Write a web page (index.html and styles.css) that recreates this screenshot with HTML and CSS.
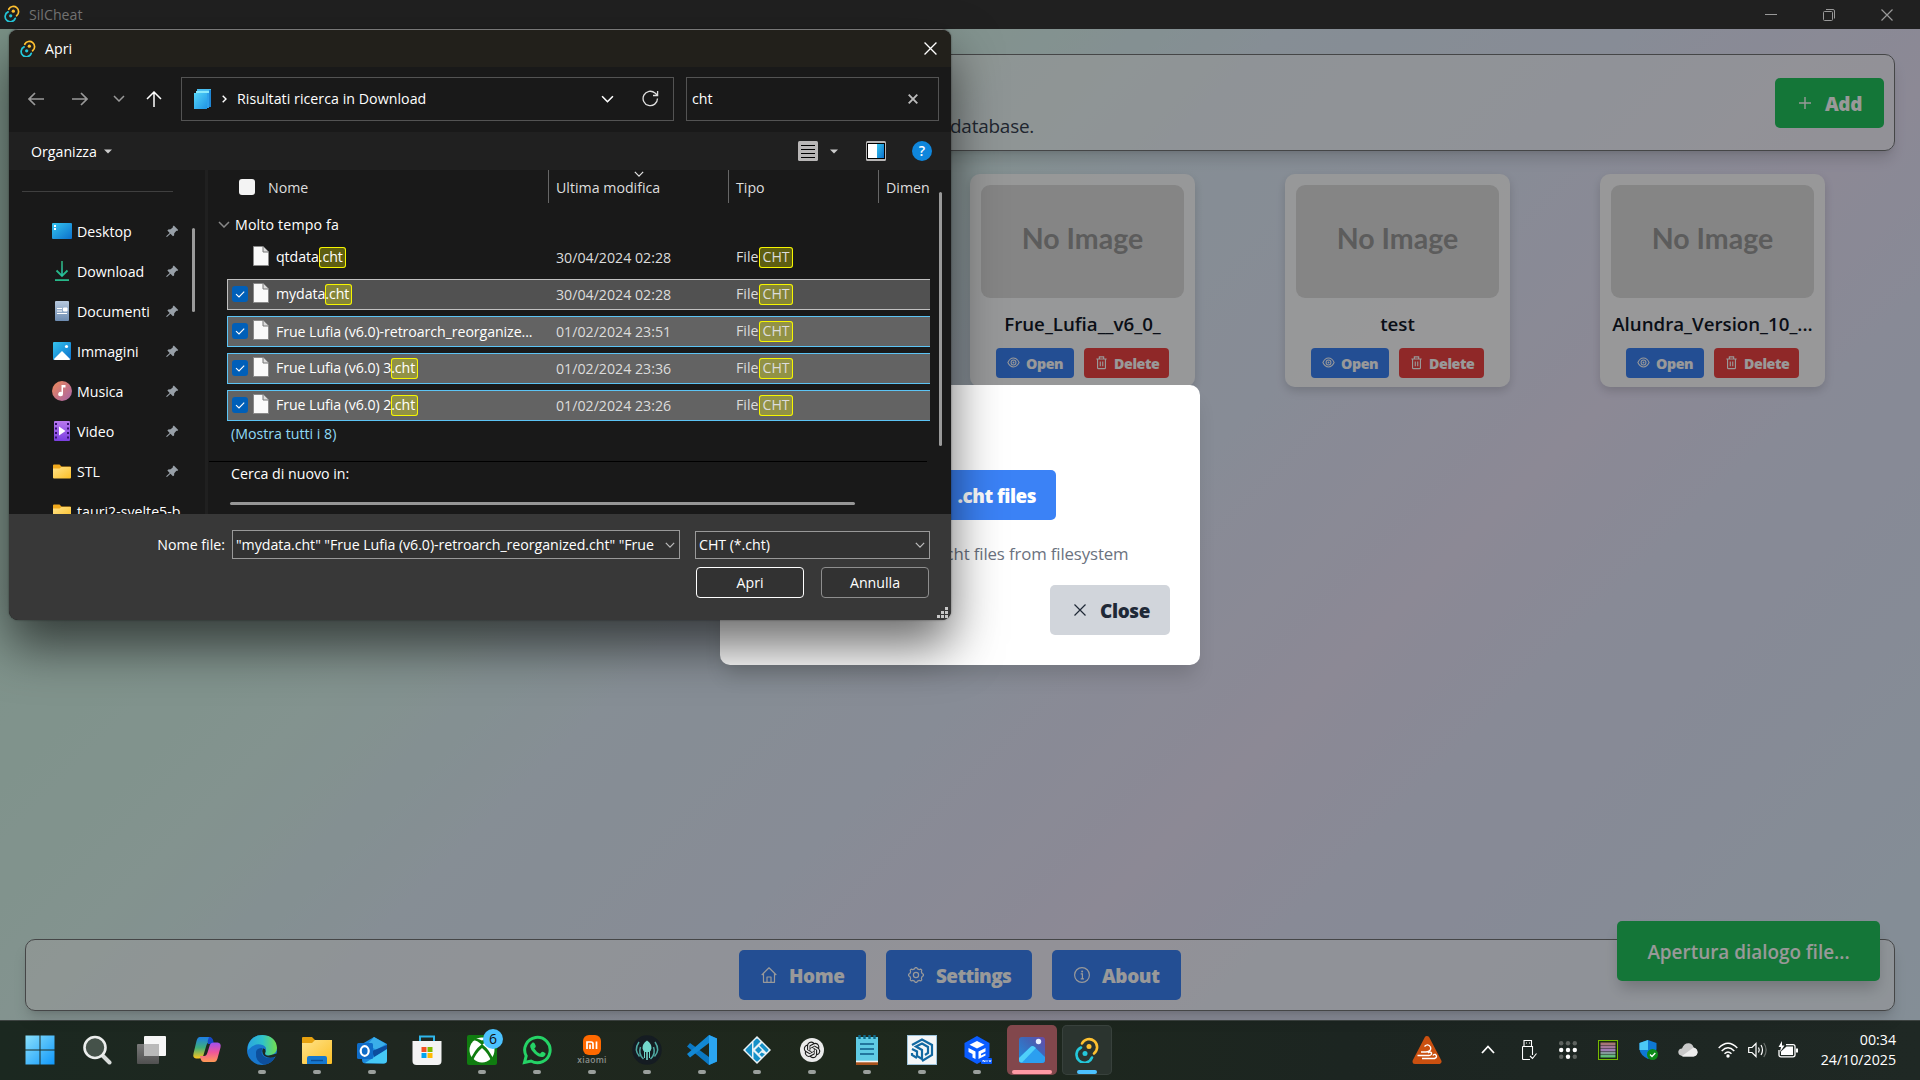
FILE: index.html
```html
<!DOCTYPE html>
<html lang="it">
<head>
<meta charset="utf-8">
<title>SilCheat</title>
<link rel="stylesheet" href="styles.css">
</head>
<body>
<svg width="0" height="0" class="defs" aria-hidden="true">
  <defs>
    <linearGradient id="gBlue" x1="0" y1="0" x2="1" y2="1"><stop offset="0" stop-color="#35c4ee"/><stop offset="1" stop-color="#0b6fcb"/></linearGradient>
    <linearGradient id="gLib" x1="0" y1="0" x2="1" y2="1"><stop offset="0" stop-color="#55d6fa"/><stop offset="1" stop-color="#1f93e4"/></linearGradient>
    <linearGradient id="gWin" x1="0" y1="0" x2="1" y2="1"><stop offset="0" stop-color="#8ae0fb"/><stop offset="1" stop-color="#1098fb"/></linearGradient>
    <linearGradient id="gFold" x1="0" y1="0" x2="1" y2="1"><stop offset="0" stop-color="#ffe38a"/><stop offset="1" stop-color="#fcbf26"/></linearGradient>
    <linearGradient id="gMus" x1="0" y1="0" x2="1" y2="1"><stop offset="0" stop-color="#ee8a58"/><stop offset="1" stop-color="#a562a8"/></linearGradient>
    <linearGradient id="gVid" x1="0" y1="0" x2="0" y2="1"><stop offset="0" stop-color="#b878ee"/><stop offset="1" stop-color="#7a3fe0"/></linearGradient>
    <linearGradient id="gDoc" x1="0" y1="0" x2="0" y2="1"><stop offset="0" stop-color="#b6c8de"/><stop offset="1" stop-color="#6d8bb0"/></linearGradient>
    <linearGradient id="gDown" x1="0" y1="0" x2="0" y2="1"><stop offset="0" stop-color="#2fae78"/><stop offset="1" stop-color="#27c6b0"/></linearGradient>
    <linearGradient id="gEdge" x1="0" y1="0" x2="1" y2="0"><stop offset="0" stop-color="#2aa5e0"/><stop offset=".5" stop-color="#2fc3c9"/><stop offset="1" stop-color="#74e04c"/></linearGradient>
    <linearGradient id="gCopA" x1="0" y1="0" x2="0" y2="1"><stop offset="0" stop-color="#1d7fe8"/><stop offset=".5" stop-color="#3fae7a"/><stop offset="1" stop-color="#ffc61c"/></linearGradient>
    <linearGradient id="gCopB" x1="0" y1="0" x2="0" y2="1"><stop offset="0" stop-color="#a050f0"/><stop offset=".5" stop-color="#f0559a"/><stop offset="1" stop-color="#ff9a55"/></linearGradient>
    <linearGradient id="gPhoto" x1="0" y1="1" x2="1" y2="0"><stop offset="0" stop-color="#1f8fe0"/><stop offset=".6" stop-color="#3f66b8"/><stop offset="1" stop-color="#6a4aa8"/></linearGradient>
    <linearGradient id="gPix" x1="0" y1="0" x2="0" y2="1"><stop offset="0" stop-color="#a87464"/><stop offset=".5" stop-color="#a07ab8"/><stop offset="1" stop-color="#4fd068"/></linearGradient>
    <linearGradient id="gGrey" x1="0" y1="0" x2="0" y2="1"><stop offset="0" stop-color="#7a7a7a"/><stop offset="1" stop-color="#505050"/></linearGradient>
  </defs>
  <symbol id="tauri" viewBox="0 0 24 26">
    <g fill="none" stroke-width="2.6" stroke-linecap="round">
      <path d="M7 6.5A8 8 0 1 1 19 16.5" stroke="#ffc131"/>
      <path d="M6 10.5A8 8 0 1 0 17 20.5" stroke="#24c8db"/>
    </g>
    <circle cx="14" cy="9.5" r="2.5" fill="#ffc131"/><circle cx="10" cy="16.5" r="2.5" fill="#24c8db"/>
  </symbol>
  <symbol id="pin" viewBox="0 0 14 14"><path d="M8.4.6 13.2 5.4 12 6.5 11.2 6.3 8.9 8.8 8.7 11.2 7.5 12 4.8 9.3 1.3 12.7.3 12.9.5 11.9 4 8.5 1.5 6 2.4 4.9 5 4.7 7.5 2.5 7.3 1.6Z" fill="#98a0a8"/></symbol>
  <symbol id="file" viewBox="0 0 16 20"><path d="M.5.5H10L15.5 6V19.5H.5Z" fill="#fafafa" stroke="#8a8a8a"/><path d="M10 .5V6H15.5" fill="#ddd" stroke="#777"/></symbol>
  <symbol id="folder" viewBox="0 0 18 15"><path d="M0 1.5Q0 .5 1 .5H6.5L8.5 2.5H17Q18 2.5 18 3.5V8H0Z" fill="#f0a81c"/><path d="M0 4.5H6.5L8.5 3H18V13.5Q18 14.5 17 14.5H1Q0 14.5 0 13.5Z" fill="url(#gFold)"/></symbol>
  <symbol id="chev" viewBox="0 0 12 7"><path d="M1 1 6 6 11 1" fill="none" stroke="currentColor" stroke-width="1.5"/></symbol>
  <symbol id="cross" viewBox="0 0 12 12"><path d="M.5.5 11.5 11.5M11.5.5.5 11.5" fill="none" stroke="currentColor" stroke-width="1.2"/></symbol>
  <symbol id="check" viewBox="0 0 16 16"><rect width="16" height="16" rx="3" fill="#005fb8"/><path d="M4 8.2 7 11 12.2 5.6" fill="none" stroke="#fff" stroke-width="1.1"/></symbol>
  <symbol id="eye" viewBox="0 0 16 16"><g fill="none" stroke="currentColor" stroke-width="1.1"><path d="M2 8Q4.2 3.3 8 3.3T14 8Q11.8 12.7 8 12.7T2 8Z"/><circle cx="8" cy="8" r="2.6"/></g><circle cx="8" cy="8" r="1" fill="currentColor"/></symbol>
  <symbol id="trash" viewBox="0 0 16 16"><path d="M2.5 4.3H13.5M5.7 4V2H10.3V4M3.8 4.5V13.5Q3.8 14.5 4.8 14.5H11.2Q12.2 14.5 12.2 13.5V4.5M6.7 7V12M9.3 7V12" fill="none" stroke="currentColor" stroke-width="1.2"/></symbol>
</svg>

<main class="app">
  <div class="titlebar">
    <svg class="tb-logo"><use href="#tauri"/></svg><span class="tb-name">SilCheat</span>
    <div class="win-ctl">
      <svg width="12" height="12"><path d="M0 5.5H12" stroke="currentColor"/></svg>
      <svg width="12" height="12"><path d="M.5 3.5Q.5 2.5 1.5 2.5H8.5Q9.5 2.5 9.5 3.5V10.5Q9.5 11.5 8.5 11.5H1.5Q.5 11.5.5 10.5ZM3 .5H10Q11.500 .5 11.5 2V9.500" fill="none" stroke="currentColor"/></svg>
      <svg width="12" height="12"><use href="#cross"/></svg>
    </div>
  </div>
  <div class="page">
    <header class="panel top-panel">
      <p class="lead">database.</p>
      <button class="btn green"><svg width="16" height="16"><path d="M8 2V14M2 8H14" stroke="currentColor" stroke-width="1.4"/></svg><span>Add</span></button>
    </header>
    <section class="cards">
      <article class="card"><div class="thumb">No Image</div><h2>Frue_Lufia__v6_0_</h2><div class="acts"><button class="sbtn open"><svg><use href="#eye"/></svg>Open</button><button class="sbtn del"><svg><use href="#trash"/></svg>Delete</button></div></article>
      <article class="card"><div class="thumb">No Image</div><h2>test</h2><div class="acts"><button class="sbtn open"><svg><use href="#eye"/></svg>Open</button><button class="sbtn del"><svg><use href="#trash"/></svg>Delete</button></div></article>
      <article class="card"><div class="thumb">No Image</div><h2>Alundra_Version_10_...</h2><div class="acts"><button class="sbtn open"><svg><use href="#eye"/></svg>Open</button><button class="sbtn del"><svg><use href="#trash"/></svg>Delete</button></div></article>
    </section>
    <footer class="panel nav-panel">
      <button class="btn blue home"><svg width="16" height="16"><path d="M.7 8 8 .8 15.300 8M2.500 6.500V15.300H13.500V6.500M6 15V10H10V15" fill="none" stroke="currentColor" stroke-width="1.2" stroke-linejoin="round"/></svg><span>Home</span></button>
      <button class="btn blue settings"><svg width="16" height="16" viewBox="0 0 16 16"><g fill="none" stroke="currentColor" stroke-width="1.200" stroke-linejoin="round"><path d="M6.500 1.900 7.300.6H8.700L9.500 1.900 11.300 2.600 12.800 2.200 13.800 3.200 13.400 4.700 14.100 6.500 15.400 7.300V8.700L14.100 9.500 13.400 11.300 13.800 12.800 12.800 13.800 11.300 13.400 9.500 14.100 8.700 15.400H7.300L6.500 14.100 4.700 13.400 3.200 13.800 2.200 12.800 2.600 11.300 1.900 9.500.6 8.700V7.300L1.900 6.500 2.600 4.700 2.200 3.200 3.200 2.200 4.700 2.600Z"/><circle cx="8" cy="8" r="2.600"/></g></svg><span>Settings</span></button>
      <button class="btn blue about"><svg width="16" height="16"><circle cx="8" cy="8" r="7.400" fill="none" stroke="currentColor" stroke-width="1.200"/><path d="M6.700 6.800H8.400V11.800M6.700 11.800H10" fill="none" stroke="currentColor" stroke-width="1.200"/><circle cx="8.100" cy="4.400" r="1" fill="currentColor"/></svg><span>About</span></button>
    </footer>
    <div class="toast">Apertura dialogo file...</div>
    <div class="shade">
      <div class="modal">
        <button class="btn pick"><span>.cht files</span></button>
        <p>cht files from filesystem</p>
        <button class="btn close"><svg width="12" height="12"><use href="#cross"/></svg><span>Close</span></button>
      </div>
    </div>
  </div>
</main>

<section class="dialog">
  <div class="d-title"><svg class="d-logo"><use href="#tauri"/></svg><span>Apri</span><svg class="d-x" width="13" height="13"><use href="#cross"/></svg></div>
  <div class="d-nav">
    <svg class="n-back" width="16" height="14"><path d="M7 1 1 7 7 13M1 7H16" fill="none" stroke="#999" stroke-width="1.700"/></svg>
    <svg class="n-fwd" width="16" height="14"><path d="M9 1 15 7 9 13M15 7H0" fill="none" stroke="#999" stroke-width="1.700"/></svg>
    <svg class="n-rec" width="12" height="7"><use href="#chev"/></svg>
    <svg class="n-up" width="16" height="16"><path d="M1 8 8 1 15 8M8 1V16" fill="none" stroke="#fff" stroke-width="1.500"/></svg>
    <div class="addr">
      <svg width="18" height="20"><path d="M3 0H17V18H3Z" fill="#49bdf0"/><path d="M17 1V18H15V1Z" fill="#1f86d4"/><path d="M2 2H15V19H2Z" fill="#8ae8fb"/><path d="M13 4H15V19H13Z" fill="#2fa0ea"/><path d="M0 4H13V20H0Z" fill="url(#gLib)"/></svg>
      <svg class="crumb" width="5" height="8"><path d="M.7.7 4 4 .7 7.300" fill="none" stroke="#fff" stroke-width="1.400"/></svg>
      <span>Risultati ricerca in Download</span>
      <svg class="a-drop" width="13" height="8"><use href="#chev"/></svg>
      <svg class="a-ref" width="17" height="17"><path d="M15.500 8.500A7.200 7.200 0 1 1 13 3L15.300 5M15.600 1V5.500H11" fill="none" stroke="#ddd" stroke-width="1.300"/></svg>
    </div>
    <div class="search"><span>cht</span><svg width="10" height="10"><path d="M.7.7 9.300 9.300M9.300.7.7 9.300" stroke="#bbb" stroke-width="1.900"/></svg></div>
  </div>
  <div class="d-tools">
    <span>Organizza</span><svg class="tri" width="8" height="5"><path d="M0 .5H8L4 4.500Z" fill="#ccc"/></svg>
    <svg class="t-list" width="20" height="20"><rect width="20" height="20" rx="1.500" fill="#b8b6b6"/><path d="M3 4.500H17M3 8.500H17M3 12.500H17M3 16.500H17" stroke="#000"/></svg>
    <svg class="t-tri" width="8" height="5"><path d="M0 .5H8L4 4.500Z" fill="#ccc"/></svg>
    <svg class="t-prev" width="20" height="20"><rect width="20" height="20" rx="1.500" fill="#b8b6b6"/><rect x="1.500" y="2.500" width="17" height="15" fill="#fff" stroke="#000"/><path d="M11 3H18V17H11Z" fill="url(#gBlue)"/></svg>
    <div class="t-help">?</div>
  </div>
  <div class="d-body">
    <aside>
      <div class="side">
        <hr>
        <div class="place"><svg width="20" height="16"><rect width="20" height="16" rx="1" fill="url(#gBlue)"/><path d="M2 2H4V4H2ZM2 5H4V7H2Z" fill="#fff"/></svg><span>Desktop</span><svg class="pin"><use href="#pin"/></svg></div>
        <div class="place"><svg width="14" height="20"><path d="M1.500 9.500 7 15 12.500 9.500" fill="none" stroke="#27b88a" stroke-width="1.800"/><path d="M0 18.200H14V20H0Z" fill="#27b88a"/><path d="M6.200 0H7.800V15H6.200Z" fill="url(#gDown)"/></svg><span>Download</span><svg class="pin"><use href="#pin"/></svg></div>
        <div class="place"><svg width="14" height="20"><rect width="14" height="20" rx="1" fill="url(#gDoc)"/><path d="M2 7.500H7M2 10H7M2 12.500H12M8.500 7H12V10H8.500Z" stroke="#fff" fill="#fff"/></svg><span>Documenti</span><svg class="pin"><use href="#pin"/></svg></div>
        <div class="place"><svg width="18" height="18"><rect width="18" height="18" rx="1" fill="url(#gBlue)"/><path d="M1 17 9 9 17 17Q17 18 16 18H2Q1 18 1 17Z" fill="#fff"/><circle cx="13.500" cy="4.500" r="1.600" fill="#fff"/></svg><span>Immagini</span><svg class="pin"><use href="#pin"/></svg></div>
        <div class="place"><svg width="20" height="20"><circle cx="10" cy="10" r="10" fill="url(#gMus)"/><path d="M9.500 4H13.500V6.500H11V13A2.400 2.200 0 1 1 9.500 11Z" fill="#fff"/></svg><span>Musica</span><svg class="pin"><use href="#pin"/></svg></div>
        <div class="place"><svg width="16" height="20"><rect width="16" height="20" rx="1" fill="url(#gVid)"/><path d="M2 2V19M14 2V19" stroke="#33106e" stroke-width="2" stroke-dasharray="2 2.500"/><path d="M5 5.500 11.500 10 5 14.500Z" fill="#fff"/></svg><span>Video</span><svg class="pin"><use href="#pin"/></svg></div>
        <div class="place"><svg width="18" height="15"><use href="#folder"/></svg><span>STL</span><svg class="pin"><use href="#pin"/></svg></div>
        <div class="place"><svg width="18" height="15"><use href="#folder"/></svg><span>tauri2-svelte5-b</span></div>
      </div>
      <div class="v-thumb"></div>
    </aside>
    <div class="list">
      <div class="l-main">
        <div class="cols"><i class="box"></i><span class="c-name">Nome</span><span class="c-date">Ultima modifica<svg width="10" height="6"><use href="#chev"/></svg></span><span class="c-type">Tipo</span><span class="c-size">Dimen</span></div>
        <div class="group"><svg width="12" height="7"><use href="#chev"/></svg>Molto tempo fa</div>
        <div class="rows">
          <div class="row"><i></i><svg class="f"><use href="#file"/></svg><span class="r-name">qtdata<mark>.cht</mark></span><span class="r-date">30/04/2024 02:28</span><span class="r-type">File<mark class="m2">CHT</mark></span></div>
          <div class="row sel cur"><svg class="c"><use href="#check"/></svg><svg class="f"><use href="#file"/></svg><span class="r-name">mydata<mark>.cht</mark></span><span class="r-date">30/04/2024 02:28</span><span class="r-type">File<mark class="m2">CHT</mark></span></div>
          <div class="row sel"><svg class="c"><use href="#check"/></svg><svg class="f"><use href="#file"/></svg><span class="r-name">Frue Lufia (v6.0)-retroarch_reorganize...</span><span class="r-date">01/02/2024 23:51</span><span class="r-type">File<mark class="m2">CHT</mark></span></div>
          <div class="row sel"><svg class="c"><use href="#check"/></svg><svg class="f"><use href="#file"/></svg><span class="r-name">Frue Lufia (v6.0) 3<mark>.cht</mark></span><span class="r-date">01/02/2024 23:36</span><span class="r-type">File<mark class="m2">CHT</mark></span></div>
          <div class="row sel"><svg class="c"><use href="#check"/></svg><svg class="f"><use href="#file"/></svg><span class="r-name">Frue Lufia (v6.0) 2<mark>.cht</mark></span><span class="r-date">01/02/2024 23:26</span><span class="r-type">File<mark class="m2">CHT</mark></span></div>
        </div>
        <div class="more">(Mostra tutti i 8)</div>
        <div class="again">Cerca di nuovo in:</div>
        <div class="h-thumb"></div>
      </div>
      <div class="v-thumb2"></div>
    </div>
  </div>
  <div class="d-foot">
    <div class="f-row"><label>Nome file:</label><div class="combo name"><span>"mydata.cht" "Frue Lufia (v6.0)-retroarch_reorganized.cht" "Frue</span><svg width="10" height="6"><use href="#chev"/></svg></div><div class="combo type"><span>CHT (*.cht)</span><svg width="10" height="6"><use href="#chev"/></svg></div></div>
    <div class="f-btns"><button class="dbtn def">Apri</button><button class="dbtn">Annulla</button></div>
    <svg class="grip" width="11" height="11"><path d="M8 0H11V3H8ZM4 4H7V7H4ZM8 4H11V7H8ZM0 8H3V11H0ZM4 8H7V11H4ZM8 8H11V11H8Z" fill="#c8c8c8"/></svg>
  </div>
</section>

<div class="taskbar">
  <div class="apps">
    <div class="slot first"><svg width="30" height="30"><path d="M.5.5H14.500V14.500H.5ZM15.500.5H29.500V14.500H15.500ZM.5 15.500H14.500V29.500H.5ZM15.500 15.500H29.500V29.500H15.500Z" fill="url(#gWin)"/></svg></div>
    <div class="slot"><svg width="30" height="30"><path d="M20.500 20.500 27.500 27.500" stroke="#d8dcda" stroke-width="4" stroke-linecap="round"/><circle cx="13" cy="12.500" r="10.500" fill="#45524a" stroke="#eceeed" stroke-width="2.600"/></svg></div>
    <div class="slot"><svg width="30" height="30"><rect x="0" y="9" width="22" height="20" rx="1" fill="url(#gGrey)"/><rect x="7" y="1" width="22" height="20" rx="1" fill="#f6f6f6"/><rect x="7" y="9" width="15" height="12" fill="#b9b9b9"/></svg></div>
    <div class="slot"><svg width="30" height="30"><path d="M8 2H17Q19.500 2 20.300 4.500L21 7H18Q15.500 7 14.500 10L11.500 20Q10.500 23.500 7 23.500H4Q.5 23 1.500 18.500L4.500 6Q5.500 2 8 2Z" fill="url(#gCopA)"/><path d="M17 2Q20 2 21 5L22 9H16Q15 6 17 2Z" fill="#1746c8"/><path d="M22 27H12Q9.500 27 8.500 23.500L8 21H12Q14.500 21 15.500 17.500L18 9.500Q19 7.500 22 7.500H25.500Q29.500 8 28.500 12.500L25.500 23.500Q24.500 27 22 27Z" fill="url(#gCopB)"/></svg></div>
    <div class="slot run"><svg width="30" height="30"><circle cx="15" cy="15" r="15" fill="#1877cc"/><path d="M1 11Q4 0 15.500 0 29 .8 30 13 29.500 20 22 20.500 17 20 18.500 16.500 20.500 12 15.500 10 8 7 1 15Z" fill="url(#gEdge)"/><path d="M9 17Q8 27 17 29.800 25 29 28 21.500 22 24.500 17 21.500 13 18 15.500 13Q9.500 13 9 17Z" fill="#0d4f9c"/><path d="M18.500 17Q16.500 21 22 20.600L28 19 30.500 18.500 30 21 28 21.800Q22 24 17.500 21 14 17.500 16 13.500Q19 13 18.500 17Z" fill="#1e2821"/></svg></div>
    <div class="slot run"><svg width="30" height="30"><path d="M0 3Q0 2 1 2H10L13 5H29Q30 5 30 6V14H0Z" fill="#e6a10f"/><path d="M0 8H10L13 5H30V28Q30 29 29 29H1Q0 29 0 28Z" fill="url(#gFold)"/><path d="M5 29V23Q5 21 7 21H23Q25 21 25 23V29Z" fill="#1678cf"/><path d="M9 25.500H21" stroke="#0a4c94" stroke-width="1.400"/></svg></div>
    <div class="slot run"><svg width="30" height="30"><path d="M5 9 17 2 30 9V25Q30 28.500 26.500 28.500H9Q5 28.500 5 25Z" fill="#1b88dc"/><path d="M11 9 17 2 29 9 19 15Z" fill="#3aaeea"/><path d="M15 16 30 10V15L17 22Z" fill="#0c4c9e"/><path d="M8 28 30 14V25Q30 28.500 26.500 28.500Z" fill="#45c8f5"/><rect x="0" y="8" width="16" height="16" rx="1.500" fill="#0f6cc8"/><ellipse cx="7.700" cy="16" rx="4" ry="4.800" fill="none" stroke="#fff" stroke-width="2.200"/></svg></div>
    <div class="slot"><svg width="30" height="30"><path d="M8 6V1.500H22V6" fill="none" stroke="#2fb6ea" stroke-width="2"/><path d="M.5 6H29.500V26Q29.500 30 25.500 30H4.500Q.5 30 .5 26Z" fill="#f3f3f3"/><path d="M9.500 12H14.500V17H9.500Z" fill="#f25022"/><path d="M15.500 12H20.500V17H15.500Z" fill="#7fba00"/><path d="M9.500 18H14.500V23H9.500Z" fill="#00a4ef"/><path d="M15.500 18H20.500V23H15.500Z" fill="#ffb900"/></svg></div>
    <div class="slot run"><svg width="30" height="30"><rect width="30" height="30" rx="2" fill="#107c10"/><circle cx="15" cy="15" r="12.500" fill="#fff"/><path d="M3 26Q7 15 14.500 9.500 10 5 5.500 5.200 9 2 15 5.500 21 2 24.500 5.200 20 5 15.500 9.500 23 15 27 26L24.500 26.500Q21 18 15 13 9 18 5.500 26.500Z" fill="#107c10"/></svg><b class="badge">6</b></div>
    <div class="slot run"><svg width="30" height="30"><path d="M2.500 27.500 4.200 21A12.700 12.700 0 1 1 9 26Z" fill="none" stroke="#25d366" stroke-width="3"/><path d="M10.500 7.500Q12 7 12.700 8.500L13.800 11Q14 12 12.300 13.500 14.500 17.300 18 18.700L19.700 17Q20.500 16.500 21.500 17L23.500 18.300Q24 20 22 21.500 18 23.500 12.500 18.500 5 11.500 10.500 7.500Z" fill="#25d366"/></svg></div>
    <div class="slot run"><svg width="30" height="20" class="mi"><rect x="6" y="0" width="18" height="20" rx="6" fill="#ff6900"/><path d="M10 14V7H14Q16 7 16 9V14M13 9.500V14M19.500 6.500V14" fill="none" stroke="#fff" stroke-width="1.700"/></svg><small>xiaomi</small></div>
    <div class="slot run"><svg width="30" height="30"><circle cx="15" cy="15" r="14.700" fill="#151c22"/><path d="M15 5.500Q20 9 19.500 13.500 19 16 17 17H13Q11 16 10.500 13.500 10 9 15 5.500ZM14.200 16H15.800V25H14.200ZM12 16H13V23H12ZM17 16H18V23H17Z" fill="#74d8cc"/><path d="M7 7Q1.500 15 7.500 21.500M23 7Q28.500 15 22.500 21.500M8.500 12Q6 19 11.500 24M21.500 12Q24 19 18.500 24" fill="none" stroke="#4fa9a2" stroke-width="1.500"/></svg></div>
    <div class="slot run"><svg width="30" height="30"><path d="M22 0 30 3.500V26.500L22 30 0 11.500 3 8 22 22Z" fill="#0b78c4"/><path d="M22 0V8L3 22.500 0 19Z" fill="#1288d4"/><path d="M22 0 30 3.500V26.500L22 30Z" fill="#2ba5f2"/></svg></div>
    <div class="slot run"><svg width="30" height="30"><path d="M15 1 29 15 15 29 1 15Z" fill="#e9f2f6"/><path d="M10 8V22L4 16Q3 15 4 14ZM11.500 6.500 14 4Q15 3 16 4L18.500 6.500 11.500 13.500ZM20 8 26 14Q27 15 26 16L24.500 17.500 17.500 10.500ZM13 15 16.500 11.500 20 15 16.500 18.500ZM11.500 16.500 18.500 23.500 16 26Q15 27 14 26L11.500 23.500ZM17.500 19.500 19.500 17.500 23 19 20 22Z" fill="#1590c8"/></svg></div>
    <div class="slot run"><svg width="30" height="30"><circle cx="15" cy="15" r="12" fill="#ebebeb"/><path transform="translate(6.800 6.600) scale(.69)" fill="#1a1a1a" d="M22.2819 9.8211a5.9847 5.9847 0 0 0-.5157-4.9108 6.0462 6.0462 0 0 0-6.5098-2.9A6.0651 6.0651 0 0 0 4.9807 4.1818a5.9847 5.9847 0 0 0-3.9977 2.9 6.0462 6.0462 0 0 0 .7427 7.0966 5.98 5.98 0 0 0 .511 4.9107 6.051 6.051 0 0 0 6.5146 2.9001A5.9847 5.9847 0 0 0 13.2599 24a6.0557 6.0557 0 0 0 5.7718-4.2058 5.9894 5.9894 0 0 0 3.9977-2.9001 6.0557 6.0557 0 0 0-.7475-7.0729zm-9.022 12.6081a4.4755 4.4755 0 0 1-2.8764-1.0408l.1419-.0804 4.7783-2.7582a.7948.7948 0 0 0 .3927-.6813v-6.7369l2.02 1.1686a.071.071 0 0 1 .038.052v5.5826a4.504 4.504 0 0 1-4.4945 4.4944zm-9.6607-4.1254a4.4708 4.4708 0 0 1-.5346-3.0137l.142.0852 4.783 2.7582a.7712.7712 0 0 0 .7806 0l5.8428-3.3685v2.3324a.0804.0804 0 0 1-.0332.0615L9.74 19.9502a4.4992 4.4992 0 0 1-6.1408-1.6464zM2.3408 7.8956a4.485 4.485 0 0 1 2.3655-1.9728V11.6a.7664.7664 0 0 0 .3879.6765l5.8144 3.3543-2.0201 1.1685a.0757.0757 0 0 1-.071 0l-4.8303-2.7865A4.504 4.504 0 0 1 2.3408 7.872zm16.5963 3.8558L13.1038 8.364 15.1192 7.2a.0757.0757 0 0 1 .071 0l4.8303 2.7913a4.4944 4.4944 0 0 1-.6765 8.1042v-5.6772a.79.79 0 0 0-.407-.667zm2.0107-3.0231l-.142-.0852-4.7735-2.7818a.7759.7759 0 0 0-.7854 0L9.409 9.2297V6.8974a.0662.0662 0 0 1 .0284-.0615l4.8303-2.7866a4.4992 4.4992 0 0 1 6.6802 4.66zM8.3065 12.863l-2.02-1.1638a.0804.0804 0 0 1-.038-.0567V6.0742a4.4992 4.4992 0 0 1 7.3757-3.4537l-.142.0805L8.704 5.459a.7948.7948 0 0 0-.3927.6813zm1.0976-2.3654l2.602-1.4998 2.6069 1.4998v2.9994l-2.5974 1.4997-2.6067-1.4997Z"/></svg></div>
    <div class="slot run"><svg width="30" height="30"><rect x="4" y="26" width="22" height="4" fill="#a8521c"/><rect x="4" y="2" width="22" height="25" fill="#5fcbe4"/><path d="M4 26.500H26" stroke="#f4f4f4" stroke-width="1.600"/><path d="M8 9H22M8 14H22M8 19H22" stroke="#0f5b86" stroke-width="1.700"/><path d="M7.500 0V4M12.500 0V4M17.500 0V4M22.500 0V4" stroke="#0f6a8a" stroke-width="2.400"/></svg></div>
    <div class="slot run"><svg width="30" height="30"><rect x=".5" y=".5" width="29" height="29" fill="#f4f6f8" stroke="#9fc5dc"/><g fill="none" stroke="#1268a2" stroke-width="2.200"><path d="M5 10 15 4.500 25 10V20L15 26"/><path d="M5 14 10 16.500V21L15 24V15L9 11.500 15 8.500 21 12V18L18 20"/><path d="M5 18V20L10 23"/></g></svg></div>
    <div class="slot run"><svg width="30" height="30"><path d="M15 1 27.500 8V22L15 29 2.500 22V8Z" fill="#0a5cff"/><path d="M15 6 22.500 9.700 15 13.500 7.500 9.700Z" fill="#fff"/><path d="M6.500 13 13.500 16.500V24L10.500 22.500V19L6.500 17ZM23.500 13 16.500 16.500V24L23.500 20.500V18.500L19 20.500V18.800L23.500 16.500Z" fill="#fff"/><rect x="19" y="23" width="11" height="6" rx="1" fill="#0a5cff"/><path d="M21 27V25L23 27V25M25 25V27M27 25 28 27 29 25" stroke="#fff" stroke-width=".8" fill="none"/></svg></div>
    <div class="slot hot"><svg width="26" height="26"><rect width="26" height="26" rx="3" fill="url(#gPhoto)"/><path d="M0 21 12 9.500Q13.500 8.500 15 9.500L26 20V23Q26 26 23 26H3Q0 26 0 23Z" fill="#2b9ff0"/><path d="M0 21 12 9.500Q13.500 8.500 15 9.500L17 11 3 25.500Q0 25 0 23Z" fill="#4fd0fa"/><circle cx="19.500" cy="4.500" r="2.700" fill="#e8f0ff"/></svg></div>
    <div class="slot on"><svg width="24" height="26"><use href="#tauri"/></svg></div>
  </div>
  <div class="tray">
    <svg class="t1" width="30" height="30"><path d="M15 3.500 27 26.500H3Z" fill="#ca5010" stroke="#ca5010" stroke-width="5" stroke-linejoin="round"/><path d="M5.500 20.500H17Q20 20 19.500 18 18 16 16 18M9 17H14Q20 16 18.500 12 16 8 12.500 11.500M10 23.500H22.500Q26 22 23.500 19.500 21.500 19 21 20.500" fill="none" stroke="#fff" stroke-width="1.400"/></svg>
    <svg class="t2" width="14" height="9"><path d="M1 8 7 1.500 13 8" fill="none" stroke="#fff" stroke-width="1.800"/></svg>
    <svg class="t3" width="15" height="20"><path d="M2 .5H9.500V6.500H2ZM.5 6.500H10.500V15M8 19.500H1.500Q.5 19.500.5 18.500V6.500M8 16 10.500 18.500 14.500 13.500M4 3H5M7 3H8" fill="none" stroke="#fff" stroke-width="1.100"/></svg>
    <svg class="t4" width="18" height="18"><g fill="#5e635f"><circle cx="2.200" cy="2.200" r="2.200"/><circle cx="9" cy="2.200" r="2.200"/><circle cx="15.800" cy="2.200" r="2.200"/><circle cx="2.200" cy="15.800" r="2.200"/><circle cx="15.800" cy="15.800" r="2.200"/></g><g fill="#fff"><circle cx="2.200" cy="9" r="2.200"/><circle cx="9" cy="9" r="2.200"/><circle cx="15.800" cy="9" r="2.200"/><circle cx="9" cy="15.800" r="2.200"/></g></svg>
    <svg class="t5" width="20" height="20"><rect x=".5" y=".5" width="19" height="19" fill="#1a2a12" stroke="#76b900"/><rect x="2" y="2" width="16" height="16" fill="url(#gPix)"/><path d="M2 5.500H18M2 8.500H18M2 11.500H18M2 14.500H18" stroke="#222" stroke-opacity=".5"/><path d="M2 2H18V18H2Z" fill="none" stroke="#1b2414"/></svg>
    <svg class="t6" width="20" height="20"><path d="M9 0 17.500 3V9Q17 15 9 19 1 15 .5 9V3Z" fill="#0f78d4"/><path d="M9 0V10H.5V3Z" fill="#4cc8f5"/><circle cx="13.500" cy="14.500" r="5.500" fill="#0c8a18"/><path d="M11 14.500 13 16.500 16.300 13" fill="none" stroke="#fff" stroke-width="1.300"/></svg>
    <svg class="t7" width="20" height="14"><path d="M4 13Q0 12 .3 8.500 1 5.500 4 5.500 6 0 11 .3 15 1 15.500 4.500 19.500 5.500 19.500 9.500 19 13 15.500 13.500H5Z" fill="#c9c9c9"/><path d="M4 13 15.500 4.500Q19.500 5.500 19.500 9.500 19 13 15.500 13.500H5Z" fill="#ededed"/></svg>
    <svg class="t8" width="20" height="16"><g fill="none" stroke="#fff" stroke-width="1.400"><path d="M.7 6Q10-3.500 19.300 6M3.700 9Q10 2.500 16.300 9M6.500 11.700Q10 8.200 13.500 11.700"/></g><circle cx="10" cy="14" r="1.700" fill="#fff"/></svg>
    <svg class="t9" width="20" height="16"><path d="M.7 5.500H4L8 1.500V14.500L4 10.500H.7ZM10.500 5.500Q12 8 10.500 10.500M13 3Q16 8 13 13" fill="none" stroke="#fff" stroke-width="1.200"/><path d="M15.800 1Q20.500 8 15.800 15" fill="none" stroke="#6a706c" stroke-width="1.200"/></svg>
    <svg class="t10" width="20" height="17"><path d="M8 3.600H15Q17 3.600 17 5.500V14Q17 15.800 15 15.800H3Q1 15.800 1 14V9" fill="none" stroke="#fff" stroke-width="1.300"/><path d="M8.500 5.500H15V14H3V10.500Z" fill="#fff"/><path d="M18 7.500H20V11.500H18Z" fill="#fff"/><path d="M4 0 .5 6H3L2 11 6.500 4.500H4Z" fill="#fff"/></svg>
    <div class="clock">00:34<br>24/10/2025</div>
  </div>
</div>
</body>
</html>
```
FILE: styles.css
```css
* { box-sizing: border-box; }
body { margin: 0; width: 1920px; height: 1080px; overflow: hidden; position: relative; background: #1e2620; font-family: "Open Sans", "Noto Sans", sans-serif; font-size: 14.2px; color: #fff; display: flex; flex-direction: column; }
button { font-family: inherit; border: 0; margin: 0; padding: 0; }
p, h2 { margin: 0; }
svg { display: block; flex: none; }
.defs { position: absolute; }

/* application window */
.app { height: 1020px; display: flex; flex-direction: column; }
.titlebar { height: 29px; background: #202020; display: flex; align-items: center; color: #757575; }
.tb-logo { width: 16px; height: 17px; margin: 0 9px 2px 4px; }
.win-ctl { margin-left: auto; display: flex; gap: 46px; padding-right: 26px; margin-right: 1px; color: #999; }
.page { position: relative; flex: 1; display: flex; flex-direction: column; padding: 25px 25px 9px;
  background: linear-gradient(135deg, #cdf3e2 0%, #d5f6e9 24%, #daf5ee 34%, #dfedf8 44%, #e2e9fa 56%, #e9e4f9 68%, #e3e6fa 75%, #dfe8fa 86%, #dcedfa 100%); }
.panel { background: rgba(255,255,255,.5); border: 1px solid #737577; border-radius: 10px; box-shadow: 0 10px 15px -3px rgba(0,0,0,.15), 0 4px 6px -4px rgba(0,0,0,.12); display: flex; align-items: center; }
.top-panel { height: 97px; padding: 0 10px 0 924px; justify-content: space-between; }
.lead { font-size: 18.9px; color: #374151; width: 83px; margin: 47px 0 0 0; white-space: nowrap; letter-spacing: -.2px; line-height: 26px; }
.btn { height: 50px; display: flex; align-items: center; border-radius: 5px; font-size: 18.9px; font-weight: 800; letter-spacing: -.35px; color: #fff; white-space: nowrap; }
.btn span { padding-top: 2px; }
.btn.green { width: 109px; background: #22c55e; padding-left: 22px; gap: 12px; }
.btn.blue { background: #3b82f6; padding-left: 22px; gap: 12px; }
.home { width: 127px; } .settings { width: 146px; letter-spacing: -.6px; } .about { width: 129px; }
.cards { display: flex; justify-content: flex-end; gap: 90px; margin-top: 23px; padding-right: 70px; }
.card { width: 225px; height: 213px; background: rgba(255,255,255,.9); border-radius: 10px; padding: 11px 11px 9px; box-shadow: 0 4px 10px rgba(0,0,0,.15); color: #111827; display: flex; flex-direction: column; align-items: center; }
.thumb { flex: none; width: 203px; height: 113px; border-radius: 9px; background: #dedede; color: #999; font: 700 28.5px/107px Lato, sans-serif; text-align: center; }
.card h2 { font-size: 18.7px; font-weight: 600; line-height: 28px; margin: 12px 0 10px; white-space: nowrap; }
.acts { display: flex; gap: 10px; }
.sbtn { height: 30px; border-radius: 4px; color: #fff; font-size: 14.2px; font-weight: 800; display: flex; align-items: center; padding: 1px 0 0 10px; gap: 5px; letter-spacing: -.4px; }
.sbtn svg { width: 15px; height: 15px; margin-bottom: 3px; }
.open { background: #3b82f6; width: 78px; } .del { background: #ef4444; width: 85px; }
.nav-panel { margin-top: auto; height: 72px; justify-content: center; gap: 20px; }
.toast { position: absolute; left: 1617px; top: 892px; width: 263px; height: 60px; border-radius: 5px; background: #22c55e; font-size: 18.9px; font-weight: 600; line-height: 62px; text-align: center; box-shadow: 0 10px 15px -3px rgba(0,0,0,.2); }
.shade { position: absolute; inset: 0; background: rgba(0,0,0,.4); display: flex; align-items: center; justify-content: center; }
.modal { width: 480px; height: 280px; background: #fff; border-radius: 10px; display: flex; flex-direction: column; align-items: center; padding: 85px 30px 30px; box-shadow: 0 15px 20px -5px rgba(0,0,0,.15); }
.pick { width: 192px; background: #3b82f6; justify-content: flex-end; padding-right: 20px; letter-spacing: -.5px; }
.modal p { width: 337px; text-align: right; font-size: 16.8px; line-height: 26px; color: #6b7280; margin-top: 21px; white-space: nowrap; letter-spacing: -.12px; }
.close { width: 120px; background: #d1d5db; color: #1f2937; align-self: flex-end; margin-top: 18px; padding-left: 24px; gap: 14px; }

/* file dialog window */
.dialog { position: absolute; left: 9px; top: 29px; width: 942px; height: 591px; border-radius: 9px; overflow: hidden; background: #191919; border-top: 1px solid #777; display: flex; flex-direction: column; box-shadow: 0 0 2px rgba(0,0,0,.5), 0 26px 50px rgba(0,0,0,.58); }
.d-title { height: 37px; background: #22201b; display: flex; align-items: center; padding: 0 14px 0 11px; }
.d-logo { width: 16px; height: 17px; margin: 0 9px 0 0; }
.d-x { margin-left: auto; }
.d-nav { height: 65px; display: flex; align-items: center; padding: 0 0 2px 19px; }
.n-fwd { margin-left: 28px; } .n-rec { margin-left: 25px; color: #999; } .n-up { margin: 0 19px 0 21px; }
.addr { width: 493px; height: 44px; border: 1px solid #535353; display: flex; align-items: center; padding-left: 12px; }
.crumb { margin: 0 10px; }
.addr span { white-space: nowrap; letter-spacing: .04px; }
.a-drop { margin-left: auto; margin-right: 28px; } .a-ref { margin-right: 14px; }
.search { width: 253px; height: 44px; border: 1px solid #535353; margin-left: 12px; display: flex; align-items: center; justify-content: space-between; padding: 0 20px 0 5px; }
.d-tools { height: 38px; background: #202020; display: flex; align-items: center; padding-left: 22px; }
.tri { margin-left: 7px; }
.t-list { margin-left: auto; } .t-tri { margin: 0 28px 0 12px; }
.t-help { margin: 0 19px 0 26px; width: 20px; height: 20px; border-radius: 50%; background: #0f86dc; text-align: center; line-height: 20px; font-size: 14px; font-weight: 600; }
.d-body { height: 344px; display: flex; }
aside { width: 196px; display: flex; }
.side { width: 174px; height: 344px; overflow: hidden; }
.side hr { border: 0; height: 1px; background: #3f3f3f; margin: 21px 10px 19px 13px; }
.place { height: 40px; display: grid; grid-template-columns: 20px 94px 14px; align-items: center; padding-left: 43px; white-space: nowrap; }
.place > svg:first-child { margin: 0 auto; }
.place span { padding-left: 5px; }
.pin { width: 13px; height: 13px; }
.v-thumb { width: 3px; height: 84px; margin: 58px 0 0 9px; border-radius: 2px; background: #9a9a9a; }
.list { flex: 1; border-left: 3px solid #202020; display: flex; padding-left: 1px; }
.l-main { width: 721px; overflow: hidden; }
.cols { display: flex; height: 33px; color: #dedede; line-height: 35px; white-space: nowrap; }
.cols span { flex: none; border-left: 1px solid #666; padding-left: 7px; position: relative; }
.box { flex: none; width: 16px; height: 16px; border-radius: 3px; background: #f3f3f3; margin: 9px 0 0 30px; }
.cols .c-name { width: 293px; border: 0; padding-left: 13px; }
.c-date { width: 180px; } .c-type { width: 150px; } .c-size { width: 60px; }
.c-date svg { position: absolute; left: 85px; top: 1px; }
.group { height: 38px; margin-top: 2px; display: flex; align-items: center; gap: 5px; padding-left: 9px; letter-spacing: .15px; }
.group svg { color: #888; }
.rows { display: flex; flex-direction: column; gap: 6px; margin: -1px 0 0 18px; }
.row { height: 31px; border: 1px solid transparent; border-right: 0; display: grid; grid-template-columns: 16px 16px 287px 180px 1fr; column-gap: 0; align-items: center; padding-left: 4px; white-space: nowrap; color: #fff; }
.row .f { width: 16px; height: 20px; margin-left: 5px; margin-bottom: 3px; }
.row .c { width: 16px; height: 16px; margin-bottom: 1px; }
.r-name { padding-left: 12px; letter-spacing: -.08px; }
.r-date, .r-type { color: #dcdcdc; }
.r-date { padding-left: 5px; } .r-type { padding-left: 5px; }
.sel { background: #636363; border-color: #5cc4f5; }
.cur { background: #515151; border-color: #c0c0c0; }
mark { display: inline-block; background: rgba(255,255,0,.3); box-shadow: inset 0 0 0 1px #f6f600; color: inherit; border-radius: 3px; height: 21px; line-height: 20px; padding: 0 3px 0 0; }
mark.m2 { padding: 0 3px; margin-left: 1px; }
.more { color: #90daf5; padding-left: 22px; margin-top: 3px; height: 20px; line-height: 20px; }
.again { border-top: 1px solid #000; margin: 17px 3px 0 0; padding: 2px 0 0 22px; line-height: 20px; height: 41px; }
.h-thumb { width: 625px; height: 3px; border-radius: 2px; background: #969696; margin-left: 21px; }
.v-thumb2 { width: 3px; height: 254px; margin: 22px 0 0 9px; border-radius: 2px; background: #9a9a9a; }
.d-foot { flex: 1; background: #383838; padding-top: 16px; position: relative; }
.f-row { display: flex; align-items: center; height: 29px; }
.f-row label { width: 223px; padding-right: 7px; text-align: right; }
.combo { height: 29px; background: #323232; border: 1px solid #999; display: flex; align-items: center; justify-content: space-between; padding: 0 4px 0 3px; white-space: nowrap; letter-spacing: -.05px; }
.combo svg { color: #bbb; }
.name { width: 448px; } .type { width: 235px; height: 28px; margin-left: 15px; }
.f-btns { display: flex; gap: 17px; padding: 8px 0 0 687px; }
.dbtn { width: 108px; height: 31px; border-radius: 4px; border: 1px solid #8e8e8e; background: #323232; color: #fff; font-size: 14.2px; }
.def { border-color: #fff; }
.grip { position: absolute; right: 3px; bottom: 2px; }

/* taskbar */
.taskbar { height: 60px; background: linear-gradient(90deg, #1b2820, #1f2720 20%, #1e281c 45%, #1c2521 70%, #1f2824); border-top: 1px solid #3d4341; display: flex; justify-content: space-between; }
.apps { display: flex; gap: 5px; padding: 4px 0 0 17px; }
.slot { width: 50px; height: 50px; border-radius: 5px; position: relative; display: flex; flex-direction: column; align-items: center; justify-content: center; }
.first { padding-right: 4px; }
.run::after { content: ""; position: absolute; left: 21px; bottom: 1px; width: 8px; height: 4px; border-radius: 2px; background: #9a9f9c; }
.hot { background: #82474c; } .on { background: #2b342f; box-shadow: inset 0 0 0 1px #38413c; }
.hot::after, .on::after { content: ""; position: absolute; left: 5px; right: 5px; bottom: 1px; height: 4px; border-radius: 2px; background: #ff99a4; }
.on::after { left: 15px; right: 15px; background: #4cc2ff; }
.badge { position: absolute; left: 26px; top: 4px; width: 20px; height: 20px; border-radius: 50%; background: #4cc2ff; color: #111; font-size: 14px; font-weight: 400; line-height: 20px; text-align: center; }
.slot small { font-size: 8.5px; line-height: 10px; color: #8d918e; letter-spacing: .3px; font-weight: 600; }
.tray { display: flex; align-items: center; padding: 0 24px 2px 0; }
.t2 { margin-left: 39px; } .t3 { margin-left: 27px; } .t4 { margin-left: 22px; } .t5 { margin-left: 21px; } .t6 { margin-left: 21px; }
.t7 { margin-left: 19px; } .t8 { margin-left: 20px; } .t9 { margin-left: 10px; } .t10 { margin-left: 10px; }
.clock { width: 98px; text-align: right; line-height: 20px; font-size: 14.2px; }
```
